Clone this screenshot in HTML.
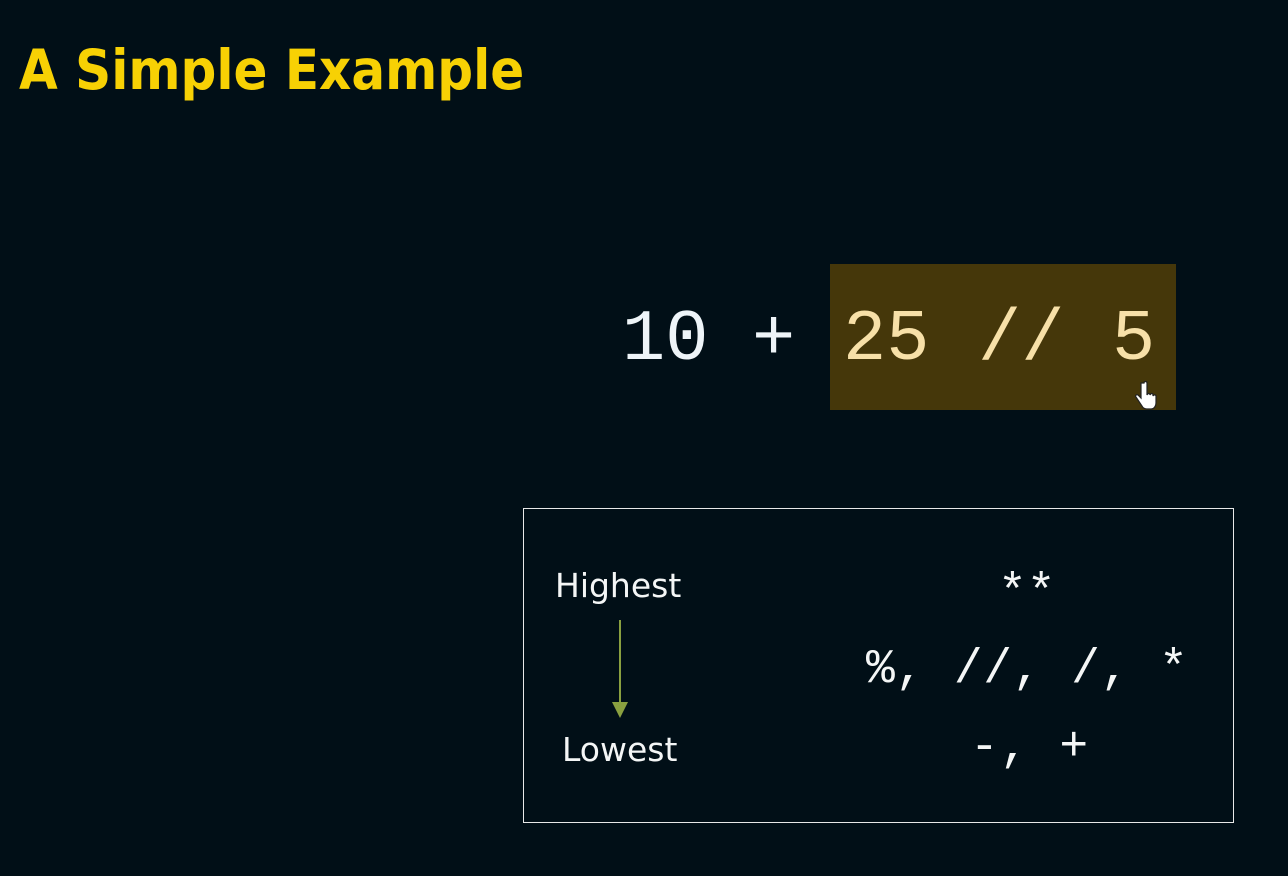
<!DOCTYPE html>
<html><head><meta charset="utf-8"><style>
html,body{margin:0;padding:0}
body{width:1288px;height:876px;background:#010f17;position:relative;overflow:hidden;font-family:"Liberation Sans",sans-serif;color:#f4f6f6}
.a{position:absolute;white-space:pre}
.title{left:19px;top:38px;font-size:55px;color:#f7d104;font-family:"DejaVu Sans","Liberation Sans",sans-serif;font-weight:bold;transform:scaleX(0.91);transform-origin:left}
.mono{font-family:"Liberation Mono",monospace;font-size:72px;line-height:1}
.hl{left:830px;top:264px;width:346px;height:146px;background:#45370a}
.box{left:523px;top:508px;width:709px;height:313px;border:1px solid #e8e8e8}
.lbl{font-size:33px;font-family:"DejaVu Sans","Liberation Sans",sans-serif;line-height:1}
.op{font-family:"Liberation Mono",monospace;font-size:48px;line-height:1}
</style></head><body>
<div class="a title">A Simple Example</div>
<div class="a hl"></div>
<div class="a mono" style="left:622px;top:304px;color:#eef4f8">10</div>
<div class="a mono" style="left:752px;top:304px;color:#eef4f8">+</div>
<div class="a mono" style="left:843px;top:304px;color:#f7e0a8">25</div>
<div class="a mono" style="left:978px;top:304px;color:#f7e0a8">//</div>
<div class="a mono" style="left:1112px;top:304px;color:#f7e0a8">5</div>
<svg class="a" style="left:1134px;top:380px" width="26" height="32" viewBox="0 0 26 32"><path d="M7 3v15l-3-3c-2-1-3 1-2 2l6 9c1 2 3 3 5 3h4c3 0 5-3 5-6v-7c0-1-2-2-3 0v-1c0-2-2-2-3 0 0-2-2-2-3 0V3c0-2-3-2-3 0z" fill="#fff" stroke="#222" stroke-width="1.2"/></svg>
<div class="a box"></div>
<div class="a lbl" style="left:555px;top:569px">Highest</div>
<div class="a lbl" style="left:562px;top:733px">Lowest</div>
<div class="a" style="left:619px;top:620px;width:2px;height:86px;background:#8aa040"></div>
<svg class="a" style="left:612px;top:702px" width="16" height="16"><path d="M0 0H16L8 16Z" fill="#8aa040"/></svg>
<div class="a op" style="left:998px;top:570px">**</div>
<div class="a op" style="left:866px;top:646px;letter-spacing:0.5px">%, //, /, *</div>
<div class="a op" style="left:970px;top:724px;letter-spacing:1px">-, +</div>
</body></html>
